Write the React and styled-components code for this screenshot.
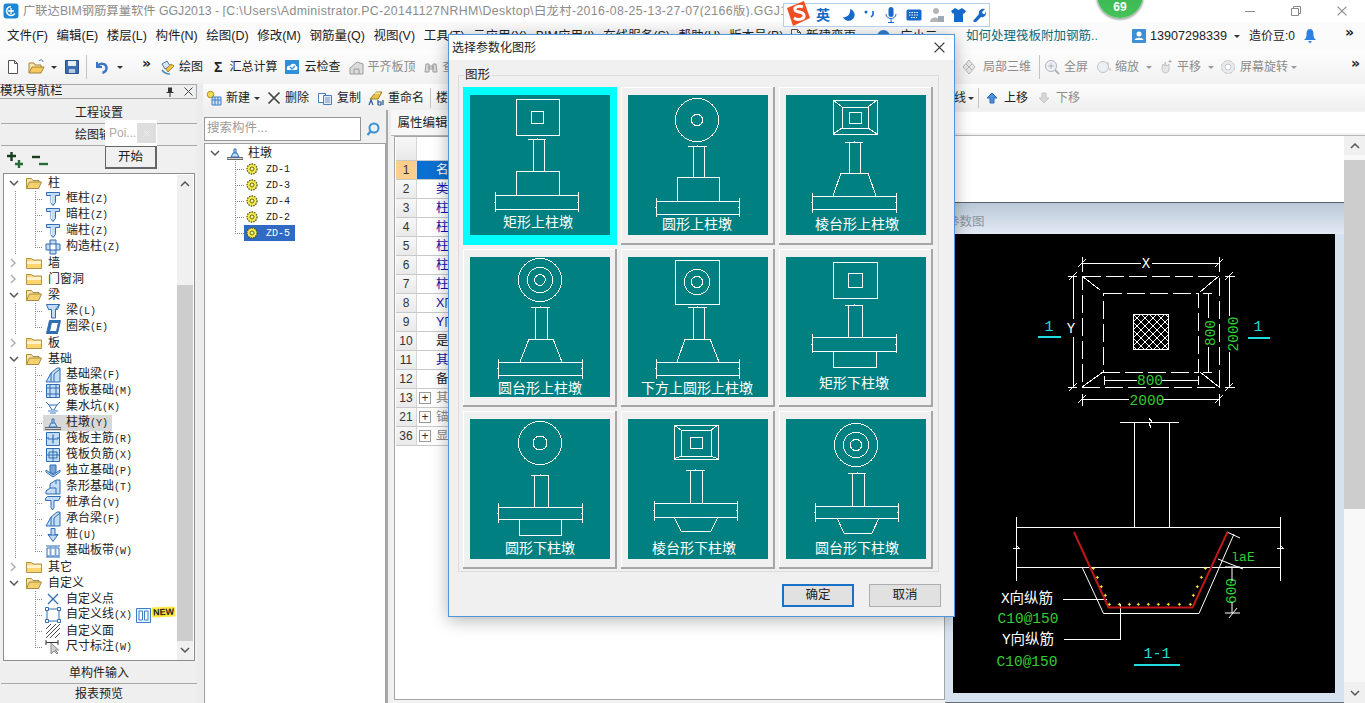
import React from 'react';
import styled, { createGlobalStyle } from 'styled-components';

const cjk = `"Liberation Sans","Noto Sans CJK SC",sans-serif`;
const mono = `"Liberation Mono","Noto Sans CJK SC",monospace`;

const Global = createGlobalStyle`
  html, body { margin: 0; padding: 0; background: #f0f0f0; overflow: hidden; }
  * { box-sizing: border-box; }
  svg { display: block; flex: none; }
`;

/* ---------- frame ---------- */
const Page = styled.div`
  position: relative; width: 1365px; height: 703px; overflow: hidden;
  display: flex; flex-direction: column; background: #f0f0f0;
  font: 12px/1 ${cjk}; color: #222;
`;
const TitleBar = styled.div`
  height: 22px; background: #fff; display: flex; align-items: center; padding-left: 3px; flex: none;
`;
const TitleText = styled.div`
  margin-left: 4px; color: #8c8c8c; white-space: nowrap; font-size: 12.3px; width: 1150px; overflow: hidden;
`;
const TitlePath = styled.span`
  letter-spacing: .37px;
`;
const WinButtons = styled.div`
  margin-left: auto; display: flex; flex: none;
`;
const WinButton = styled.div`
  width: 46px; height: 22px; display: flex; align-items: center; justify-content: center;
`;
const MenuBar = styled.div`
  height: 28px; flex: none; background: #fbfbfb; display: flex; align-items: center; padding-left: 7px;
`;
const MenuItem = styled.span`
  font-size: 12.5px; margin-left: ${p => p.$ml ?? 8.5}px; white-space: nowrap; color: ${p => p.$c || '#222'};
  &:first-child { margin-left: 0; }
`;
const Tools = styled.div`
  height: 34px; flex: none; background: linear-gradient(#fdfdfd, #f1f1f1); display: flex; align-items: center; padding-left: 5px;
`;
const Group = styled.div`
  display: flex; align-items: center; height: 100%; flex: none;
  margin-left: ${p => (p.$right ? 'auto' : '0')};
  width: ${p => (p.$w ? `${p.$w}px` : 'auto')};
`;
const Item = styled.span`
  display: inline-flex; align-items: center; flex: none; white-space: nowrap;
  margin-left: ${p => p.$ml || 0}px; color: ${p => (p.$muted ? '#8b8b8b' : '#222')};
  font-size: ${p => p.$fs || 12}px;
`;
const Sep = styled.span`
  width: 1px; height: ${p => p.$h || 24}px; background: #c4c4c4; flex: none; margin-left: ${p => p.$ml || 0}px;
`;
const Caret = styled.i`
  width: 0; height: 0; flex: none; margin-left: ${p => p.$ml || 0}px; margin-top: 1px;
  border-left: 3px solid transparent; border-right: 3px solid transparent;
  border-top: 3px solid ${p => p.$c || '#333'};
`;
const More = styled.span`
  font: bold 14px/1 "DejaVu Sans", sans-serif; flex: none; margin-left: ${p => p.$ml || 0}px; margin-top: -8px; color: #222;
`;
const Body = styled.div`
  flex: 1; min-height: 0; display: flex;
`;

/* ---------- navigation column ---------- */
const Nav = styled.aside`
  width: 197px; flex: none; display: flex; flex-direction: column; background: #f0f0f0;
`;
const NavHead = styled.div`
  height: 15px; flex: none; border: 1px solid #a8a8a8; border-left: 0; display: flex; align-items: center; justify-content: space-between;
  padding-right: 3px; background: #eee; font-size: 12.5px; margin-bottom: 3px;
`;
const NavHeadIcons = styled.div`
  display: flex; gap: 10px; align-items: center;
`;
const NavButton = styled.div`
  height: ${p => p.$h || 22}px; flex: none; margin: 0 0 0 1px; border-bottom: 1px solid #a9a9a9; display: flex; align-items: center; justify-content: center; background: #efefef;
`;
const NavIcons = styled.div`
  height: 27px; flex: none; display: flex; align-items: center; gap: 7px; padding-left: 6px;
`;
const TreeBox = styled.div`
  height: 488px; flex: none; margin: 0 2px 1px 3px; border: 1px solid #8d8d8d; background: #fff; display: flex; padding-top: 1px; overflow: hidden;
`;
const TreeRows = styled.div`
  flex: 1; min-width: 0;
`;
const Row = styled.div`
  height: 16px; display: flex; align-items: center; font: 12px/16px ${mono}; white-space: nowrap;
`;
const Chevron = styled.span`
  width: 22px; height: 16px; flex: none; padding-left: 5px; display: flex; align-items: center;
`;
const Spine = styled.span`
  width: ${p => p.$w || 31}px; height: 16px; flex: none;
  ${p => p.$on ? `background: repeating-linear-gradient(to bottom,#8a8a8a 0 1px,transparent 1px 2px) 11px 0/1px 16px no-repeat;` : ''}
`;
const Branch = styled.span`
  width: ${p => p.$w || 8}px; height: 16px; flex: none;
  background:
    repeating-linear-gradient(to bottom,#8a8a8a 0 1px,transparent 1px 2px) 0 0/1px ${p => (p.$last ? 8 : 16)}px no-repeat,
    repeating-linear-gradient(to right,#8a8a8a 0 1px,transparent 1px 2px) 0 8px/100% 1px no-repeat;
`;
const RowLabel = styled.span`
  margin-left: ${p => p.$ml ?? 3}px; padding: ${p => p.$pt || 0}px ${p => p.$pr ?? 2}px 0 ${p => p.$pl ?? 2}px; height: 16px; display: inline-block;
  background: ${p => (p.$sel ? p.$sel : 'transparent')}; color: ${p => p.$fg || '#222'};
`;
const IconSlot = styled.span`
  display: inline-flex; padding-left: ${p => p.$pl || 0}px; background: ${p => p.$sel || 'transparent'}; height: 16px; align-items: center;
`;
const Key = styled.span`
  font: 10px/16px ${mono};
`;
const VScroll = styled.div`
  width: ${p => p.$w || 16}px; flex: none; background: ${p => p.$bg || '#f0f0f0'}; display: flex; flex-direction: column; align-items: center; margin-right: ${p => p.$mr || 0}px;
`;
const ScrollEnd = styled.div`
  height: ${p => p.$h || 18}px; flex: none; width: 100%; display: flex; align-items: center; justify-content: center;
  background: ${p => p.$bg || 'transparent'}; margin-top: ${p => (p.$end ? 'auto' : '0')};
`;
const Thumb = styled.div`
  width: 100%; flex: none; height: ${p => p.$h}px; margin-top: ${p => p.$top}px; background: #cdcdcd;
`;
const NewTag = styled.span`
  font: bold 9px/10px "Liberation Sans",sans-serif; color: #222; background: #ffe93a; padding: 0 1px; margin: -6px 0 0 1px; align-self: center; transform: rotate(-3deg);
`;

/* ---------- work area ---------- */
const Gutter = styled.div`
  width: 6px; flex: none; background: #ececec;
`;
const Work = styled.main`
  flex: 1; min-width: 0; display: flex; flex-direction: column;
`;
const SubBar = styled.div`
  height: 26px; flex: none; background: linear-gradient(#fdfdfd, #efefef); display: flex; align-items: center; padding: 2px 0 0 3px;
`;
const Panes = styled.div`
  flex: 1; min-height: 0; display: flex;
`;
const Components = styled.div`
  width: 183px; flex: none; display: flex; flex-direction: column; padding-top: 7px;
`;
const SearchRow = styled.div`
  height: 24px; flex: none; display: flex; align-items: center; margin-left: 1px;
`;
const SearchInput = styled.div`
  width: 157px; height: 24px; border: 1px solid #969696; background: #fff; color: #9a9a9a; display: flex; align-items: center; padding: 0 0 1px 2px; font-size: 12.5px;
`;
const SearchBtn = styled.div`
  width: 24px; display: flex; justify-content: center;
`;
const CompTree = styled.div`
  flex: 1; margin: 2px 0 0 1px; border: 1px solid #9e9e9e; border-bottom: 0; background: #fff; padding-top: 1px;
`;
const Sash = styled.div`
  width: 5px; flex: none; background: linear-gradient(to right,#a8a8a8 0 2px,#eee 2px);
`;
const Props = styled.div`
  flex: 1; min-width: 0; display: flex; flex-direction: column;
`;
const TabStrip = styled.div`
  height: 26px; flex: none; display: flex; border-bottom: 1px solid #b5b5b5; background: #f2f2f2;
`;
const Tab = styled.div`
  width: 60px; display: flex; align-items: center; justify-content: center; background: #f7f7f7; font-size: 12.5px; padding: 1px 0 0 3px;
`;
const Field = styled.div`
  margin: 2px 0 2px auto; width: 420px; background: #fff;
`;
const Split = styled.div`
  flex: 1; min-height: 0; display: flex;
`;
const TablePane = styled.div`
  width: 554px; flex: none; padding: 0 0 3px 3px; background: #f2f2f2; display: flex;
`;
const Table = styled.div`
  flex: 1; background: #fff; border: 1px solid #a5a5a5; padding-left: 1px;
`;
const TRow = styled.div`
  display: flex; height: ${p => p.$h || 19}px; border-bottom: 1px solid #c9c9c9;
`;
const NumCell = styled.div`
  width: 21px; flex: none; display: flex; align-items: center; justify-content: center; font-size: 12px;
  background: ${p => (p.$active ? '#fcd08c' : 'linear-gradient(#f7f7f7,#e9e9e9)')}; color: #333;
  border-right: 1px solid #d5d5d5;
`;
const NameCell = styled.div`
  flex: 1; display: flex; align-items: center; padding-left: ${p => (p.$plus ? 2 : 19)}px; font-size: 12.5px; white-space: nowrap;
  background: ${p => (p.$active ? '#0a6fd0' : '#fff')};
  color: ${p => p.$c};
`;
const PlusBox = styled.span`
  width: 12px; height: 12px; border: 1px solid #9a9a9a; margin-right: 5px; display: flex; align-items: center; justify-content: center; color: #333; font: 12px/1 "Liberation Sans",sans-serif; flex: none;
`;
const RightPane = styled.div`
  flex: 1; min-width: 0; display: flex; background: #fff;
`;
const RightBody = styled.div`
  flex: 1; min-width: 0; display: flex; flex-direction: column;
`;
const WhiteTop = styled.div`
  flex: 1; background: #fff;
`;
const CadFrame = styled.div`
  height: 501px; flex: none; border-top: 1px solid #5a5f66; border-bottom: 1px solid #6a6f76; background: #d6e2f0; display: flex; flex-direction: column;
  padding: 0 8px 8px 8px;
`;
const CadTitle = styled.div`
  height: 31px; flex: none; margin: 0 -8px; padding: 13px 0 0 2px; background: linear-gradient(#b9c8d8,#e2eaf4); color: #8d949b; font-size: 12.5px;
`;
const CadCanvas = styled.div`
  width: 382px; height: 459px; flex: none; background: #000;
`;

/* ---------- dialog ---------- */
const Dialog = styled.section`
  position: absolute; left: 448px; top: 34px; width: 507px; height: 583px;
  background: #f0f0f0; border: 1px solid #4f97dc; box-shadow: 0 3px 16px rgba(0,0,0,.3);
  display: flex; flex-direction: column;
`;
const DialogHead = styled.header`
  height: 25px; flex: none; background: #fff; display: flex; align-items: center; justify-content: space-between; padding: 0 9px 0 3px;
`;
const Fieldset = styled.fieldset`
  margin: 7px 0 0 9px; width: 481px; height: 505px; border: 1px solid #dcdcdc; padding: 4px 0 0 4px; flex: none; min-width: 0;
`;
const Legend = styled.legend`
  font-size: 12.5px; padding: 0 1px; margin-left: 1px; line-height: 16px;
`;
const Grid = styled.div`
  display: grid; grid-template-columns: repeat(3,154px); grid-auto-rows: 158px; column-gap: 4px; row-gap: 4px;
`;
const Tile = styled.div`
  padding: 8px 0 0 7px;
  background: ${p => (p.$on ? '#00ffff' : '#f0f0f0')};
  border-right: ${p => (p.$on ? 'none' : '2px solid #a6a6a6')};
  border-bottom: ${p => (p.$on ? 'none' : '2px solid #a6a6a6')};
  box-shadow: ${p => (p.$on ? 'none' : 'inset 1px 1px 0 #fff')};
`;
const TileArt = styled.svg`
  background: #008080;
`;
const DialogFoot = styled.footer`
  display: flex; justify-content: flex-end; gap: 15px; padding: 12px 13px 0 0;
`;
const DlgButton = styled.div`
  width: 72px; height: 23px; display: flex; align-items: center; justify-content: center; background: #e1e1e1; font-size: 12.5px;
  border: ${p => (p.$primary ? '2px solid #1a72c8' : '1px solid #adadad')};
`;

/* ---------- floating pieces ---------- */
const Popup = styled.div`
  position: absolute; left: 105px; top: 120px; width: 52px; z-index: 3;
`;
const PopupHead = styled.div`
  height: 26px; background: #fff; display: flex; align-items: center; justify-content: space-between; padding: 0 1px 0 4px; color: #aaa; font-size: 12px;
`;
const PopupClose = styled.span`
  width: 19px; height: 20px; background: #dedede; color: #eee; display: flex; align-items: center; justify-content: center;
`;
const PopupBtn = styled.div`
  height: 23px; background: #f0f0f0; border: 1px solid #666; border-width: 1px 2px 2px 1px; display: flex; align-items: center; justify-content: center; font-size: 12.5px;
`;
const Ime = styled.div`
  position: absolute; left: 783px; top: 3px; width: 207px; height: 24px; background: #fff; border: 1px solid #b5cfe8; z-index: 4; display: flex; align-items: center;
`;
const ImeLogo = styled.div`
  position: absolute; left: 1px; top: -4px;
`;
const ImeGlyph = styled.span`
  font: bold 14px/1 ${cjk}; color: #1769c9; margin-left: ${p => p.$ml || 0}px;
`;
const Ball = styled.div`
  position: absolute; left: 1097px; top: -28px; width: 46px; height: 46px; border-radius: 50%;
  background: linear-gradient(#2fae4a,#46c25a); box-shadow: 0 1px 2px 1px rgba(90,110,95,.55);
  display: flex; align-items: flex-end; justify-content: center; padding-bottom: 5px; color: #fff; font: bold 12px/1 "Liberation Sans",sans-serif; z-index: 4;
`;

/* ---------- icons ---------- */
const B = '#2f6db5', L = '#c5dcf5', G = '#9c9c9c';
const Ico = ({ s = 16, children, vb = 16 }) => <svg width={s} height={s} viewBox={`0 0 ${vb} ${vb}`} fill="none">{children}</svg>;

const treeIcons = {
  col: <><path d="M1.5 1.5h13v3h-4v7l-2.500 3-2.500-3v-7h-4z" fill={L} stroke={B} /><path d="M6 5v7" stroke="#fff" /></>,
  knit: <><path d="M5 1h6v4h4v6h-4v4H5v-4H1V5h4z" fill={L} stroke={B} /><path d="M5 5h6v6H5z" fill="#fff" stroke={B} /></>,
  beam: <><path d="M1.500 1.500h13l-2 5h-2V15h-4V6.500h-3z" fill={L} stroke={B} /><path d="M10.500 6.500l4-5" stroke={B} /></>,
  ring: <path d="M4.500 1.500h11l-3 13h-11zM6.500 3.500l-2 9h7l2-9z" fill={B} stroke={B} fillRule="evenodd" />,
  fbeam: <><path d="M1 15l5-9 6-5h3v14z" fill={L} stroke={B} /><path d="M6 6v9M9 15V7l6-5" stroke={B} /></>,
  raft: <><path d="M1.500 1.500h13v13h-13z" fill={L} stroke={B} /><path d="M1.500 5h13M1.500 11h13M5 1.500v13M11 1.500v13" stroke={B} /></>,
  pit: <><path d="M1 3l3 3h8l3-3M4 6l3 5h2l3-5" stroke={B} fill="none" /><path d="M3 12h10M5 14h6" stroke="#9cc0e6" strokeWidth="2" /></>,
  pier: <><path d="M0 14.500h16v-2H0z" fill="#d4d4d4" stroke="#6a6a6a" /><path d="M4 12l2-4h4l2 4zM7 8V4h2v4" fill={L} stroke={B} /></>,
  main: <><path d="M1.500 1.500h13v13h-13z" fill={L} stroke={B} /><path d="M3 8h10M8 3.500v9M3 8V6M13 8V6" stroke={B} strokeWidth="1.200" /></>,
  neg: <><path d="M1.500 1.500h13v13h-13z" fill={L} stroke={B} /><path d="M4 5h8v6H4zM1.500 8h13M8 1.500v13" stroke={B} /></>,
  iso: <><path d="M1 9l7 5 7-5v-2l-7 5-7-5z" fill={L} stroke={B} /><path d="M5 2h6v7l-3 2-3-2z" fill="#7aa7db" stroke={B} /></>,
  strip: <><path d="M1 15v-3l4-3V5l6-4h4v14z" fill={L} stroke={B} /><path d="M5 9h6v6M11 5V1" stroke={B} /></>,
  cap: <><path d="M0.500 3.500l2-2h13l-2 4H9v7L7.500 15 6 12.500v-7H0.500z" fill={L} stroke={B} /></>,
  pile: <><path d="M6 1.500h4v6h3l-5 7-5-7h3z" fill={L} stroke={B} /><path d="M3 8h10" stroke={B} /></>,
  band: <><path d="M1 3h14M1 14h14M2 5h12v8H2z" stroke={B} /><path d="M5.500 3v11M10.500 3v11" stroke="#7aa7db" strokeWidth="2" /></>,
  pt: <path d="M3 3l10 10M13 3L3 13" stroke={B} strokeWidth="1.300" />,
  sq: <><path d="M2 2h12v12H2z" stroke={B} /><path d="M0.500 0.500h3v3h-3zM12.500 0.500h3v3h-3zM0.500 12.500h3v3h-3zM12.500 12.500h3v3h-3z" fill="#fff" stroke={B} /></>,
  hatch: <path d="M1 6l5-5M1 11L11 1M1 15L15 1M5 15L15 5M10 15l5-5" stroke="#4b4b4b" />,
  dim: <><path d="M1 1v5M1 3.500h12M13 1v5" stroke="#333" /><path d="M6 4v11l3-3 3 3 1-1-3-3h3.500z" fill="#cfcfcf" stroke="#8a8a8a" /></>,
};
const TreeIcon = ({ k }) => <Ico>{treeIcons[k]}</Ico>;

const FolderOpen = () => (
  <Ico>
    <path d="M0.500 13.500v-10h5l1.500 2h6v2" fill="#f7e3a6" stroke="#a98a3e" />
    <path d="M0.500 13.500l3-6.500h12l-3 6.500z" fill="#f8d16f" stroke="#a98a3e" />
  </Ico>
);
const FolderClosed = () => (
  <Ico>
    <path d="M0.500 13.500v-10h5l1.500 1.500h8.500v8.500z" fill="#fbd46d" stroke="#b0924a" />
    <path d="M1 6h14v3H1z" fill="#fff2c8" />
  </Ico>
);
const ChevD = ({ c = '#555' }) => <svg width="10" height="8" viewBox="0 0 10 8"><path d="M1 2l4 4 4-4" stroke={c} strokeWidth="1.500" fill="none" /></svg>;
const ChevU = ({ c = '#555' }) => <svg width="10" height="8" viewBox="0 0 10 8"><path d="M1 6l4-4 4 4" stroke={c} strokeWidth="1.500" fill="none" /></svg>;
const ChevR = () => <svg width="8" height="10" viewBox="0 0 8 10"><path d="M2 1l4 4-4 4" stroke="#b0b0b0" strokeWidth="1.500" fill="none" /></svg>;

const Gear = () => (
  <svg width="16" height="16" viewBox="0 0 16 16">
    <circle cx="8" cy="8" r="5" fill="#ffe94a" stroke="#4f5c1e" strokeWidth="1.300" strokeDasharray="1.500 1" />
    <circle cx="8" cy="8" r="2" fill="#f6f2a0" stroke="#5d6b20" />
  </svg>
);

const Doc = () => <Ico><path d="M3.500 1.500h6l3 3v10h-9z" fill="#fff" stroke="#555" /><path d="M9.500 1.500v3h3" stroke="#555" /></Ico>;
const OpenTb = () => <Ico s={18} vb={18}><path d="M1 15V5h5l1 2h6v2" fill="#fbe6ae" stroke="#a58438" /><path d="M1 15l3-6h12l-3 6z" fill="#f5c95e" stroke="#a58438" /><path d="M11 3c2-2 4-1 4 1" stroke="#3c78bd" /></Ico>;
const Save = () => <Ico><path d="M1.500 1.500h13v13h-13z" fill="#3b6db3" stroke="#27508c" /><path d="M4 2h8v5H4z" fill="#e8eef6" /><path d="M5 10h6v4H5z" fill="#b9c9de" /></Ico>;
const Undo = () => <Ico><path d="M3 3v5h5" stroke="#3c76c4" strokeWidth="2" fill="none" /><path d="M3.500 7.500C6 3.500 12.500 4 12.500 9c0 2-1.500 4-4 5" stroke="#3c76c4" strokeWidth="2.500" fill="none" /></Ico>;
const Draw = () => <Ico><path d="M2 5l5-3 3 5-5 3z" fill="#d9e7f6" stroke="#4977ae" /><path d="M6 10l5-5 3 2-6 6z" fill="#f0c24a" stroke="#a1832c" /><path d="M2 11c2 3 5 4 8 4" stroke="#4a90c8" strokeWidth="1.500" /></Ico>;
const Cloud = () => <Ico><path d="M1 1h14v14H1z" fill="#2f8fd8" /><path d="M3 11c-1-3 1-5 3-4 1-3 6-3 6 0 2 0 2 4 0 4z" fill="#fff" /><path d="M6 8l2 2 3-3" stroke="#2f8fd8" strokeWidth="1.300" fill="none" /></Ico>;
const Flat = () => <Ico><path d="M1 15V9l7-6 6 2v10z" fill="#dcdcdc" stroke={G} /><path d="M5 15v-5h5v5" stroke={G} /></Ico>;
const Binoc = () => <Ico><path d="M2 13l1-8h3v8zM10 13V5h3l1 8zM6 7h4v3H6z" fill="#d9d9d9" stroke={G} /></Ico>;
const GrayCube = () => <Ico><path d="M8 1l6 7-6 7-6-7z" fill="#e6e6e6" stroke="#b4b4b4" /><path d="M5 5l6 6M11 5l-6 6" stroke="#b4b4b4" /></Ico>;
const Mag = () => <Ico><circle cx="7" cy="7" r="5.500" fill="#eef2f6" stroke="#aeb4ba" /><path d="M7 4v6M4 7h6" stroke="#aeb4ba" /><path d="M11 11l4 4" stroke="#aeb4ba" strokeWidth="2" /></Ico>;
const Zoom = () => <Ico><circle cx="7" cy="8" r="5.500" fill="#edf0f3" stroke="#c0c4c8" /><path d="M12 3v3M14 9v3" stroke="#bbb" /></Ico>;
const Hand = () => <Ico><path d="M4 8l1-3 2 2V3l2 4 2-2v5c0 3-2 4-4 4s-3-2-3-6z" fill="#e5e5e5" stroke="#c2c2c2" /><path d="M12 1v3M10.500 2.500h3" stroke="#aaa" /></Ico>;
const Rot = () => <Ico><circle cx="8" cy="8" r="6.500" fill="#e9ecee" stroke="#c2c6ca" strokeDasharray="4 1" /><circle cx="8" cy="8" r="3" fill="#fff" stroke="#c2c6ca" /></Ico>;
const UserChip = () => <Ico><path d="M1 2a1 1 0 011-1h12a1 1 0 011 1v12a1 1 0 01-1 1H2a1 1 0 01-1-1z" fill="#3f8fd6" /><circle cx="8" cy="6" r="2.500" fill="#fff" /><path d="M3.500 12c1-3 8-3 9 0z" fill="#fff" /></Ico>;
const Bell = () => <Ico><path d="M8 1c3 0 3.500 3 3.500 6s1.500 4 2.500 5H2c1-1 2.500-2 2.500-5S5 1 8 1z" fill="#2f7fe0" /><path d="M6 13h4l-2 2.500z" fill="#2f7fe0" /></Ico>;
const NewIcon = () => <Ico><circle cx="4.500" cy="4.500" r="3.200" fill="#f6dc55" stroke="#a98c20" /><path d="M6 7h9v8H6z" fill="#cfe1f6" stroke="#3f7fc4" /><path d="M6 10h9M9 7v8M12 7v8" stroke="#3f7fc4" /></Ico>;
const XMark = () => <Ico s={14} vb={14}><path d="M1.500 1.500l11 11M12.500 1.500l-11 11" stroke="#444" strokeWidth="1.700" /></Ico>;
const CopyIcon = () => <Ico><path d="M1.500 3.500h7v9h-7z" fill="#fff" stroke="#4a7fb9" /><path d="M6.500 5.500h8v9h-8z" fill="#dfeaf6" stroke="#4a7fb9" /><path d="M8 8h5M8 10h5M8 12h5" stroke="#6d98c6" /></Ico>;
const Rename = () => <Ico><path d="M2 9l6-7h6l-4 7z" fill="#e6c04a" stroke="#9b7f1f" /><path d="M4 3h8" stroke="#fff" /><path d="M1 15l2-5 2 5M10 10v5M10 12h3v3h-3M15 10v5" stroke="#24569a" strokeWidth="1.200" fill="none" /></Ico>;
const UpArrow = ({ on }) => <Ico s={14} vb={14}><path d="M7 2l5 5H9v5H5V7H2z" fill={on ? '#4c8fdc' : '#d8d8d8'} stroke={on ? '#2e6ab4' : '#c4c4c4'} /></Ico>;
const DownArrow = () => <Ico s={14} vb={14}><path d="M7 12L2 7h3V2h4v5h3z" fill="#d8d8d8" stroke="#c4c4c4" /></Ico>;
const SearchIcon = () => <Ico><circle cx="9" cy="7" r="4.500" fill="#e8f2fb" stroke="#3f8fd0" strokeWidth="2" /><path d="M5.500 10.500L2.500 14" stroke="#3f8fd0" strokeWidth="2.200" /></Ico>;
const Pin = () => <svg width="8" height="10" viewBox="0 0 8 10"><path d="M2 0.500h4V5H7.500v1h-3v4h-1V6h-3V5H2z" fill="#333" /></svg>;
const SmallX = ({ c = '#444', s = 9 }) => <svg width={s} height={s} viewBox="0 0 9 9"><path d="M0.500 0.500l8 8M8.500 0.500l-8 8" stroke={c} /></svg>;
const PlusTool = () => <Ico s={18} vb={18}><path d="M1 5h9M5.500 1v9" stroke="#173d1f" strokeWidth="2.400" /><path d="M9 13h8M13 9v8" stroke="#2a6a35" strokeWidth="2.400" /></Ico>;
const MinusTool = () => <Ico s={18} vb={18}><path d="M1 6h8" stroke="#173d1f" strokeWidth="2.400" /><path d="M8 13h9" stroke="#2a6a35" strokeWidth="2.400" /></Ico>;
const AppLogo = () => <Ico><rect x="0.500" y="0.500" width="15" height="15" rx="3" fill="#1b87d6" /><path d="M8 3.500a4.500 4.500 0 103.800 7" stroke="#fff" strokeWidth="1.500" fill="none" /><path d="M8 5v6M5 8h6" stroke="#fff" strokeWidth="1.300" /></Ico>;
const NewWin = () => <svg width="15" height="15" viewBox="0 0 15 15"><path d="M0.500 0.500h14v14H0.500z" fill="#eaf3fc" stroke="#3f7fc4" /><path d="M3 3h3.500v9H3zM8.500 3H12v9H8.500z" fill="#fff" stroke="#3f7fc4" /></svg>;
const Dot = () => <svg width="13" height="13" viewBox="0 0 13 13"><circle cx="6.500" cy="6.500" r="6.500" fill="#2f7fd0" /></svg>;

/* ---------- tiles ---------- */
const stem = (a, b, y, x1, x2, bot) => `M${a} ${y}H${b}M${x1} ${y}V${bot}M${x2} ${y}V${bot}M${(a + b) / 2} ${y - 1}v2`;
const slab = (x1, x2, y1, y2, t, u) => `M${x1} ${y1}H${x2}M${x1} ${y2}H${x2}M${x1} ${t}V${u}M${x2} ${t}V${u}M${x1 - 1} ${(y1 + y2) / 2}h2M${x2 - 1} ${(y1 + y2) / 2}h2`;
const rect = (x1, y1, x2, y2) => `M${x1} ${y1}H${x2}V${y2}H${x1}Z`;
const diag = (a, b, c, d, e, f, g, h) => `M${a} ${b}L${e} ${f}M${c} ${b}L${g} ${f}M${a} ${d}L${e} ${h}M${c} ${d}L${g} ${h}`;

const tiles = [
  { label: '矩形上柱墩', cap: [68, 127], on: true, circles: [], d: [rect(46, 4, 89, 40), rect(61, 16, 73, 28), stem(58, 76, 44, 63, 74, 76), rect(46, 76, 89, 100), slab(25, 108, 100, 114, 97, 117)] },
  { label: '圆形上柱墩', cap: [69, 129], circles: [[69, 25, 21.5], [69, 25, 5.7]], d: [stem(60, 79, 51, 65, 76, 82), rect(49, 82, 91, 106), slab(28, 111, 106, 119, 103, 122)] },
  { label: '棱台形上柱墩', cap: [71, 129], circles: [], d: [rect(47, 5, 91, 39), rect(56, 12, 82, 33), rect(63, 17, 75, 28), diag(47, 5, 91, 39, 56, 12, 82, 33), stem(59, 77, 47, 63, 74, 78), 'M55 78H82L90 101M55 78L47 101', slab(26, 110, 101, 114, 98, 118)] },
  { label: '圆台形上柱墩', cap: [70, 131], circles: [[70, 23, 21.5], [70, 23, 12.7], [70, 23, 5.3]], d: [stem(61, 80, 50, 65, 77, 82), 'M59 82H83L92 105M59 82L50 105', slab(28, 112, 105, 118, 102, 122)] },
  { label: '下方上圆形上柱墩', cap: [69, 131], circles: [[69, 25, 12.7], [69, 25, 5.7]], d: [rect(47, 3, 91, 47), stem(60, 79, 50, 65, 76, 82), 'M57 82H82L91 105M57 82L49 105', slab(28, 111, 105, 118, 102, 122)] },
  { label: '矩形下柱墩', cap: [68, 126], circles: [], d: [rect(47, 5, 91, 41), rect(62, 16, 76, 30), stem(59, 77, 48, 62, 76, 80), slab(26, 110, 80, 94, 77, 96), 'M47 94V110H90V94'] },
  { label: '圆形下柱墩', cap: [70, 129], circles: [[70, 24, 21.5], [70, 24, 7]], d: [stem(61, 79, 56, 64, 78, 88), slab(28, 112, 88, 100, 84, 104), 'M49 100V116H91V100'] },
  { label: '棱台形下柱墩', cap: [66, 129], circles: [], d: [rect(46, 6, 90, 40), rect(53, 11, 83, 37), rect(62, 18, 74, 29), diag(46, 6, 90, 40, 53, 11, 83, 37), stem(58, 77, 51, 62, 74, 84), slab(26, 109, 84, 98, 82, 102), 'M46 98L53 112H83L90 98'] },
  { label: '圆台形下柱墩', cap: [71, 129], circles: [[70, 26, 21.5], [70, 26, 12.7], [70, 26, 5.7]], d: [stem(62, 80, 54, 66, 78, 87), slab(29, 112, 87, 99, 84, 103), 'M51 99L58 114H86L93 99'] },
];

const TileDrawing = ({ t }) => (
  <TileArt width="140" height="140" viewBox="0 0 140 140" shapeRendering="crispEdges">
    <path d={t.d.join('')} stroke="#fff" fill="none" />
    {t.circles.map((c, i) => <circle key={i} cx={c[0]} cy={c[1]} r={c[2]} stroke="#fff" fill="none" />)}
    <text x={t.cap[0]} y={t.cap[1] + 5} fill="#fff" fontSize="14" textAnchor="middle" fontFamily={`"Noto Sans CJK SC",sans-serif`}>{t.label}</text>
  </TileArt>
);

/* ---------- CAD drawing ---------- */
const dots = [[445,475],[457,502],[469,530],[481,556],[493,583],[523,583],[553,583],[580,583],[610,583],[640,583],[670,583],[703,583],[736,583],[745,556],[757,530],[769,502],[781,475]];
const tick = (x, y) => `M${x - 4} ${y + 4}L${x + 4} ${y - 4}`;
const CadDrawing = () => {
  const mf = `"Liberation Mono",monospace`;
  const cf = `"Liberation Mono","Noto Sans CJK SC",monospace`;
  return (
    <svg width="382" height="459" viewBox="0 0 382 459">
      <defs>
        <pattern id="xh" width="8" height="8" patternUnits="userSpaceOnUse" patternTransform="translate(180 80)">
          <path d="M0 0l8 8M8 0L0 8" stroke="#fff" strokeWidth="1" />
        </pattern>
      </defs>
      <g stroke="#fff" fill="none" shapeRendering="crispEdges">
        <path d="M129 29H188M199 29H266M129 23V38M266 23V38" />
        <path d={tick(129, 29) + tick(266, 29)} />
        <rect x="129.500" y="42.500" width="137" height="111" strokeDasharray="18 5" />
        <rect x="150.500" y="59" width="95" height="79" strokeDasharray="18 5" />
        <path d="M129 42L147 56M266 42L247 58M129 153L150 138M266 153L247 138" />
        <rect x="180.500" y="80.500" width="35" height="35" fill="url(#xh)" />
        <path d="M120 42V85M120 103V153M115 42H124M115 153H124" />
        <path d={tick(120, 42) + tick(120, 153)} />
        <path d="M276 42V82M276 118V153M272 42H282M272 153H282" />
        <path d={tick(276, 42) + tick(276, 153)} />
        <path d="M255 59V84M255 113V138M250 59H259M250 138H259" />
        <path d="M151 146H184M209 146H245M151 142V151M245 142V151" />
        <path d="M129 165H176M209 165H266M129 160V172M266 160V172" />
        <path d={tick(129, 165) + tick(266, 165)} />
      </g>
      <path d="M85 102.500H108M295 103.500H317" stroke="#22dddd" strokeWidth="2" shapeRendering="crispEdges" />
      <g fontFamily={mf}>
        <text x="193" y="34" fill="#fff" fontSize="14" textAnchor="middle">X</text>
        <text x="118" y="99" fill="#fff" fontSize="14" textAnchor="middle">Y</text>
        <text x="96" y="97" fill="#22dddd" fontSize="15" textAnchor="middle">1</text>
        <text x="305" y="97" fill="#22dddd" fontSize="15" textAnchor="middle">1</text>
        <text x="197" y="151" fill="#33cc33" fontSize="14.500" textAnchor="middle">800</text>
        <text x="194" y="171" fill="#33cc33" fontSize="14.500" textAnchor="middle">2000</text>
        <text x="0" y="0" fill="#33cc33" fontSize="14.500" textAnchor="middle" transform="translate(262 99) rotate(-90)">800</text>
        <text x="0" y="0" fill="#33cc33" fontSize="14.500" textAnchor="middle" transform="translate(285 100) rotate(-90)">2000</text>
        <text x="0" y="0" fill="#33cc33" fontSize="14.500" textAnchor="middle" transform="translate(283 357) rotate(-90)">600</text>
        <text x="290" y="327" fill="#33cc33" fontSize="13" textAnchor="middle">laE</text>
        <text x="204" y="424" fill="#22dddd" fontSize="15" textAnchor="middle">1-1</text>
      </g>
      <g stroke="#fff" fill="none" shapeRendering="crispEdges">
        <path d="M167 188H226M181 188V293M216 188V293M63 293H327M63 333H327M63 283V347M327 283V347" />
        <path d="M196 184l3 4-3 1 2 5M60 314h6l-3-3M324 314h6l-3-3" />
      </g>
      <g stroke="#fff" fill="none">
        <path d="M129 333L150.500 379.500H246L281 300" />
        <path d="M274 298L287 304M265 325L290 335M272 333H287M272 379H287M279 333V347M279 368V379M276 384L284 374" />
        <path d="M110 365.500H154M111 405.500H167V370" shapeRendering="crispEdges" />
      </g>
      <path d="M121 298L155.500 373.500H239.500L274.500 298" stroke="#c01818" strokeWidth="2" fill="none" />
      {dots.map((p, i) => (
        <path key={i} d={`M${p[0] / 3 - 8 - 1.500} ${p[1] / 3 + 176}h3M${p[0] / 3 - 8} ${p[1] / 3 + 176 - 1.500}v3`} stroke="#ffee33" />
      ))}
      <g fontFamily={cf} fontSize="14.500" textAnchor="middle">
        <text x="74" y="369" fill="#fff">X向纵筋</text>
        <text x="75" y="389" fill="#33cc33">C10@150</text>
        <text x="75" y="410" fill="#fff">Y向纵筋</text>
        <text x="74" y="432" fill="#33cc33">C10@150</text>
      </g>
      <path d="M181 431H227" stroke="#22dddd" strokeWidth="2" shapeRendering="crispEdges" />
    </svg>
  );
};

/* ---------- data ---------- */
const navTree = [
  { name: '柱', open: true, spine: true, kids: [['框柱', '(Z)', 'col'], ['暗柱', '(Z)', 'col'], ['端柱', '(Z)', 'col'], ['构造柱', '(Z)', 'knit']] },
  { name: '墙' },
  { name: '门窗洞' },
  { name: '梁', open: true, spine: true, kids: [['梁', '(L)', 'beam'], ['圈梁', '(E)', 'ring']] },
  { name: '板' },
  { name: '基础', open: true, spine: true, kids: [['基础梁', '(F)', 'fbeam'], ['筏板基础', '(M)', 'raft'], ['集水坑', '(K)', 'pit'], ['柱墩', '(Y)', 'pier', true], ['筏板主筋', '(R)', 'main'], ['筏板负筋', '(X)', 'neg'], ['独立基础', '(P)', 'iso'], ['条形基础', '(T)', 'strip'], ['桩承台', '(V)', 'cap'], ['承台梁', '(F)', 'fbeam'], ['桩', '(U)', 'pile'], ['基础板带', '(W)', 'band']] },
  { name: '其它' },
  { name: '自定义', open: true, kids: [['自定义点', '', 'pt'], ['自定义线', '(X)', 'sq', false, true], ['自定义面', '', 'hatch'], ['尺寸标注', '(W)', 'dim']] },
];

const tableRows = [
  ['1', '名称', '', true], ['2', '类别', '#1313a6'], ['3', '柱墩高度', '#1313a6'], ['4', '柱墩截面', '#1313a6'], ['5', '柱墩配筋', '#1313a6'],
  ['6', '柱墩宽度', '#1313a6'], ['7', '柱墩长度', '#1313a6'], ['8', 'X向纵筋', '#1313a6'], ['9', 'Y向纵筋', '#1313a6'], ['10', '是否按板边切割', '#222'],
  ['11', '其它钢筋', '#1313a6'], ['12', '备注', '#222'], ['13', '其它属性', '#8a8a8a', false, true], ['21', '锚固搭接', '#8a8a8a', false, true], ['36', '显示样式', '#8a8a8a', false, true],
];

const menus = ['文件(F)', '编辑(E)', '楼层(L)', '构件(N)', '绘图(D)', '修改(M)', '钢筋量(Q)', '视图(V)', '工具(T)', '云应用(Y)', 'BIM应用(I)', '在线服务(S)', '帮助(H)', '版本号(B)'];

export default function App() {
  return (
    <Page>
      <Global />
      <TitleBar>
        <AppLogo />
        <TitleText>广联达BIM钢筋算量软件 GGJ2013 - <TitlePath>[C:\Users\Administrator.PC-20141127NRHM\Desktop\白龙村-2016-08-25-13-27-07(2166版).GGJ12]</TitlePath></TitleText>
        <WinButtons>
          <WinButton><svg width="10" height="1"><path d="M0 .5h10" stroke="#8a8a8a" /></svg></WinButton>
          <WinButton><svg width="10" height="10"><path d="M.5 2.500h7v7h-7zM2.500 2.500v-2h7v7h-2" stroke="#8a8a8a" fill="none" /></svg></WinButton>
          <WinButton><SmallX c="#8a8a8a" s={10} /></WinButton>
        </WinButtons>
      </TitleBar>

      <MenuBar>
        <Group $w={775}>
          {menus.map(m => <MenuItem key={m}>{m}</MenuItem>)}
        </Group>
        <Group $w={184}>
          <Item $ml={6}><Doc /></Item>
          <MenuItem $ml={2}>新建变更</MenuItem>
          <Item $ml={21}><Dot /></Item>
          <MenuItem $ml={10}>广小二</MenuItem>
        </Group>
        <Group>
          <MenuItem $c="#0b6a7a">如何处理筏板附加钢筋..</MenuItem>
          <Item $ml={33}><UserChip /></Item>
          <Item $ml={3} $fs={12.6}>13907298339</Item>
          <Caret $ml={7} />
          <Item $ml={9}>造价豆:0</Item>
          <Item $ml={7}><Bell /></Item>
          <More $ml={27}>»</More>
        </Group>
      </MenuBar>

      <Tools>
        <Group $w={950}>
          <Doc />
          <Item $ml={7}><OpenTb /></Item>
          <Caret $ml={5} />
          <Item $ml={7}><Save /></Item>
          <Sep $ml={6} />
          <Item $ml={7}><Undo /></Item>
          <Caret $ml={7} />
          <More $ml={19}>»</More>
          <Item $ml={9}><Draw /></Item>
          <Item $ml={3}>绘图</Item>
          <Item $ml={11} $fs={14}><b>Σ</b></Item>
          <Item $ml={7}>汇总计算</Item>
          <Item $ml={7}><Cloud /></Item>
          <Item $ml={4}>云检查</Item>
          <Item $ml={8}><Flat /></Item>
          <Item $ml={3} $muted>平齐板顶</Item>
          <Item $ml={7}><Binoc /></Item>
          <Item $ml={4} $muted>查找</Item>
        </Group>
        <Group>
          <Item $ml={6}><GrayCube /></Item>
          <Item $ml={6} $muted>局部三维</Item>
          <Sep $ml={8} />
          <Item $ml={4}><Mag /></Item>
          <Item $ml={4} $muted>全屏</Item>
          <Item $ml={8}><Zoom /></Item>
          <Item $ml={3} $muted>缩放</Item>
          <Caret $ml={7} $c="#999" />
          <Item $ml={6}><Hand /></Item>
          <Item $ml={3} $muted>平移</Item>
          <Caret $ml={7} $c="#999" />
          <Item $ml={6}><Rot /></Item>
          <Item $ml={4} $muted>屏幕旋转</Item>
          <Caret $ml={3} $c="#999" />
          <More $ml={54}>»</More>
        </Group>
      </Tools>

      <Body>
        <Nav>
          <NavHead>模块导航栏<NavHeadIcons><Pin /><SmallX /></NavHeadIcons></NavHead>
          <NavButton>工程设置</NavButton>
          <NavButton>绘图输入</NavButton>
          <NavIcons><PlusTool /><MinusTool /></NavIcons>
          <TreeBox>
            <TreeRows>
              {navTree.map(g => (
                <React.Fragment key={g.name}>
                  <Row>
                    <Chevron>{g.open ? <ChevD /> : <ChevR />}</Chevron>
                    {g.open ? <FolderOpen /> : <FolderClosed />}
                    <RowLabel $ml={4} $pt={1}>{g.name}</RowLabel>
                  </Row>
                  {g.kids && g.kids.map((k, i) => (
                    <Row key={k[0] + i}>
                      <Spine $on={g.spine} />
                      <Branch $last={i === g.kids.length - 1} />
                      <IconSlot $pl={2} $sel={k[3] ? '#d8d8d8' : undefined}><TreeIcon k={k[2]} /></IconSlot>
                      <RowLabel $ml={0} $pl={5} $pr={4} $pt={k[1] ? 0 : 1} $sel={k[3] ? '#d8d8d8' : undefined}>
                        {k[0]}{k[1] && <Key>{k[1]}</Key>}
                      </RowLabel>
                      {k[4] && <><NewWin /><NewTag>NEW</NewTag></>}
                    </Row>
                  ))}
                </React.Fragment>
              ))}
            </TreeRows>
            <VScroll $mr={1}>
              <ScrollEnd><ChevU /></ScrollEnd>
              <Thumb $top={92} $h={356} />
              <ScrollEnd><ChevD /></ScrollEnd>
            </VScroll>
          </TreeBox>
          <NavButton>单构件输入</NavButton>
          <NavButton $h={20}>报表预览</NavButton>
        </Nav>
        <Gutter />
        <Work>
          <SubBar>
            <Group $w={748}>
              <NewIcon />
              <Item $ml={4}>新建</Item>
              <Caret $ml={4} />
              <Item $ml={7}><XMark /></Item>
              <Item $ml={4}>删除</Item>
              <Item $ml={8}><CopyIcon /></Item>
              <Item $ml={4}>复制</Item>
              <Item $ml={7}><Rename /></Item>
              <Item $ml={4}>重命名</Item>
              <Sep $ml={6} $h={20} />
              <Item $ml={5}>楼层</Item>
            </Group>
            <Group>
              <Item>线</Item>
              <Caret $ml={2} />
              <Sep $ml={4} $h={20} />
              <Item $ml={6}><UpArrow on /></Item>
              <Item $ml={5}>上移</Item>
              <Item $ml={9}><DownArrow /></Item>
              <Item $ml={5} $muted>下移</Item>
            </Group>
          </SubBar>
          <Panes>
            <Components>
              <SearchRow>
                <SearchInput>搜索构件...</SearchInput>
                <SearchBtn><SearchIcon /></SearchBtn>
              </SearchRow>
              <CompTree>
                <Row>
                  <Chevron><ChevD /></Chevron>
                  <TreeIcon k="pier" />
                  <RowLabel $ml={3} $pt={1}>柱墩</RowLabel>
                </Row>
                {['ZD-1', 'ZD-3', 'ZD-4', 'ZD-2', 'ZD-5'].map((z, i) => (
                  <Row key={z}>
                    <Spine $w={30} />
                    <Branch $w={9} $last={i === 4} />
                    <IconSlot $sel={i === 4 ? '#316ac5' : undefined}><Gear /></IconSlot>
                    <RowLabel $ml={0} $pl={6} $pr={5} $sel={i === 4 ? '#316ac5' : undefined} $fg={i === 4 ? '#fff' : undefined}><Key>{z}</Key></RowLabel>
                  </Row>
                ))}
              </CompTree>
            </Components>
            <Sash />
            <Props>
              <TabStrip>
                <Tab>属性编辑</Tab>
                <Field />
              </TabStrip>
              <Split>
                <TablePane>
                  <Table>
                    <TRow $h={24}><NumCell /><NameCell /></TRow>
                    {tableRows.map(r => (
                      <TRow key={r[0]}>
                        <NumCell $active={r[3]}>{r[0]}</NumCell>
                        <NameCell $active={r[3]} $plus={r[4]} $c={r[3] ? '#fff' : r[2]}>
                          {r[4] && <PlusBox>+</PlusBox>}{r[1]}
                        </NameCell>
                      </TRow>
                    ))}
                  </Table>
                </TablePane>
                <RightPane>
                  <RightBody>
                    <WhiteTop />
                    <CadFrame>
                      <CadTitle>参数图</CadTitle>
                      <CadCanvas><CadDrawing /></CadCanvas>
                    </CadFrame>
                  </RightBody>
                  <VScroll $w={21} $bg="#f8f8f8">
                    <ScrollEnd $h={19} $bg="#f0f0f0"><ChevU /></ScrollEnd>
                    <Thumb $top={5} $h={349} />
                    <ScrollEnd $h={21} $end $bg="#f0f0f0"><ChevD /></ScrollEnd>
                  </VScroll>
                </RightPane>
              </Split>
            </Props>
          </Panes>
        </Work>
      </Body>

      <Popup>
        <PopupHead>Poi...<PopupClose><SmallX c="#f2f2f2" s={7} /></PopupClose></PopupHead>
        <PopupBtn>开始</PopupBtn>
      </Popup>

      <Ime>
        <ImeLogo>
          <svg width="26" height="28" viewBox="0 0 26 28">
            <path d="M2 8L19 1l6 17-17 8z" fill="#ef4f22" />
            <path d="M18 7c-4-2-9 0-8 3s8 1 9 5-6 6-10 3" stroke="#fff" strokeWidth="3" fill="none" />
          </svg>
        </ImeLogo>
        <ImeGlyph $ml={32}>英</ImeGlyph>
        <Item $ml={12}><svg width="14" height="14" viewBox="0 0 14 14"><path d="M8 1a6 6 0 11-7 8c4 1 8-3 7-8z" fill="#1769c9" /></svg></Item>
        <Item $ml={8}><svg width="12" height="14" viewBox="0 0 12 14"><circle cx="2" cy="4" r="1.500" fill="#1769c9" /><path d="M9 3v4l-2 2" stroke="#1769c9" strokeWidth="1.600" fill="none" /></svg></Item>
        <Item $ml={9}><svg width="12" height="16" viewBox="0 0 12 16"><rect x="3.500" y="0" width="5" height="10" rx="2.500" fill="#1769c9" /><path d="M1 7c0 6 10 6 10 0M6 12v3M3 15.500h6" stroke="#1769c9" fill="none" /></svg></Item>
        <Item $ml={9}><svg width="16" height="12" viewBox="0 0 16 12"><rect x=".5" y=".5" width="15" height="11" rx="1.500" fill="#1769c9" /><path d="M3 3.500h10M3 6h10M5 8.500h6" stroke="#fff" strokeDasharray="1.500 1" /></svg></Item>
        <Item $ml={7}><svg width="16" height="16" viewBox="0 0 16 16"><circle cx="7" cy="4" r="3" fill="#b5b5b5" /><path d="M1 15c0-6 10-6 10 0z" fill="#b5b5b5" /><rect x="9" y="9" width="6" height="6" fill="#9fa9b2" /></svg></Item>
        <Item $ml={6}><svg width="15" height="14" viewBox="0 0 15 14"><path d="M4 0l3.500 2L11 0l4 3-2 3-1-1v9H3V5L2 6 0 3z" fill="#1769c9" /></svg></Item>
        <Item $ml={6}><svg width="14" height="14" viewBox="0 0 14 14"><path d="M1 13l6-7c-1-3 2-6 6-5l-3 3 1 2 2 0 1-3c1 4-2 7-5 6l-6 6z" fill="#1769c9" /></svg></Item>
      </Ime>
      <Ball>69</Ball>

      <Dialog>
        <DialogHead>
          选择参数化图形
          <SmallX c="#333" s={11} />
        </DialogHead>
        <Fieldset>
          <Legend>图形</Legend>
          <Grid>
            {tiles.map(t => (
              <Tile key={t.label} $on={t.on}><TileDrawing t={t} /></Tile>
            ))}
          </Grid>
        </Fieldset>
        <DialogFoot>
          <DlgButton $primary>确定</DlgButton>
          <DlgButton>取消</DlgButton>
        </DialogFoot>
      </Dialog>
    </Page>
  );
}
